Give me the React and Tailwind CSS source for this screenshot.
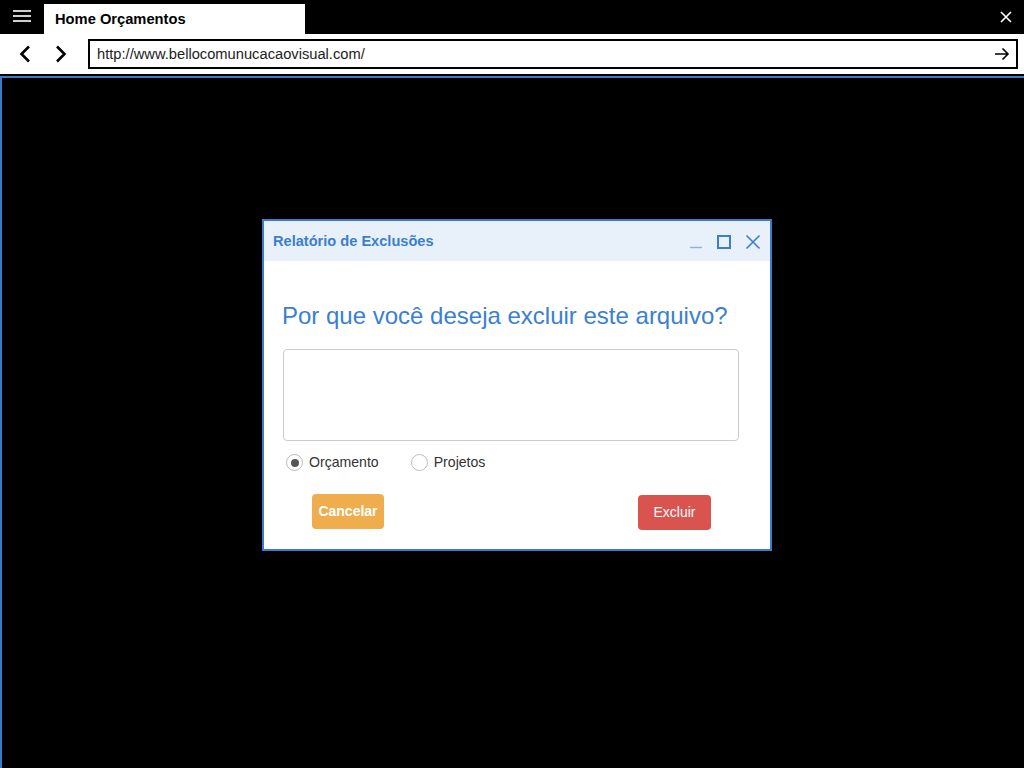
import React, { useState } from 'react';

const App = () => {
  const [kind, setKind] = useState('orcamento');

  return (
    <div className="w-[1024px] h-[768px] bg-black flex flex-col overflow-hidden" style={{ fontFamily: '"Liberation Sans", Arial, sans-serif' }}>
      {/* title bar */}
      <div className="h-[34px] flex items-end shrink-0">
        <div className="w-[44px] h-[34px] flex items-center justify-center">
          <svg width="18" height="14" viewBox="0 0 18 14" className="mb-[2px]">
            <path d="M0 2h18M0 7h18M0 12h18" stroke="#d0d0d0" strokeWidth="2" />
          </svg>
        </div>
        <div className="w-[261px] h-[30px] bg-white flex items-center pl-[11px] text-[14.7px] font-bold text-black">
          Home Orçamentos
        </div>
        <div className="flex-1" />
        <div className="w-[32px] h-[34px] flex items-center justify-center mr-[2px]">
          <svg width="12" height="12" viewBox="0 0 12 12">
            <path d="M1 1l10 10M11 1L1 11" stroke="#fff" strokeWidth="1.6" />
          </svg>
        </div>
      </div>

      {/* address row */}
      <div className="h-[40px] bg-white flex items-center shrink-0 pr-[6px]">
        <div className="w-[88px] flex items-center">
          <svg width="12" height="18" viewBox="0 0 12 18" className="ml-[19px]">
            <path d="M10 1.5L2.5 9l7.5 7.5" fill="none" stroke="#000" strokeWidth="2.6" />
          </svg>
          <svg width="12" height="18" viewBox="0 0 12 18" className="ml-[24px]">
            <path d="M2 1.5L9.5 9L2 16.5" fill="none" stroke="#000" strokeWidth="2.6" />
          </svg>
        </div>
        <div className="flex-1 h-[30px] border-2 border-black flex items-center pl-[7px] pr-[6px] text-[14.7px] text-[#222]">
          <span className="flex-1">http://www.bellocomunucacaovisual.com/</span>
          <svg width="16" height="14" viewBox="0 0 16 14">
            <path d="M1 7h13M8.5 1.5L14 7l-5.5 5.5" fill="none" stroke="#000" strokeWidth="1.6" />
          </svg>
        </div>
      </div>
      <div className="h-[2px] bg-black shrink-0" />

      {/* content area */}
      <div className="flex-1 border-t-2 border-l-2 border-[#3a78c8] flex items-start justify-start pt-[141px] pl-[260px]">
        <div className="w-[510px] h-[332px] border-2 border-[#3a7bd5] bg-white flex flex-col">
          <div className="h-[40px] bg-[#e8f0f9] flex items-center pl-[9px] pr-[9px] pt-[1px]">
            <span className="flex-1 text-[14.6px] font-bold text-[#3b7fcc]">Relatório de Exclusões</span>
            <div className="flex items-center gap-[14px]">
              <svg width="14" height="14" viewBox="0 0 14 14">
                <path d="M1 12.5h12" stroke="#8db3e0" strokeWidth="1.5" />
              </svg>
              <svg width="14" height="14" viewBox="0 0 14 14">
                <rect x="1" y="1" width="12" height="12" fill="none" stroke="#3b7fcc" strokeWidth="2" />
              </svg>
              <svg width="16" height="16" viewBox="0 0 16 16">
                <path d="M1.5 1.5l13 13M14.5 1.5l-13 13" stroke="#3b7fcc" strokeWidth="1.6" />
              </svg>
            </div>
          </div>
          <div className="flex flex-col px-[19px]">
            <div className="mt-[40px] text-[24px] leading-[30px] text-[#3a80d2] -ml-[1px]">
              Por que você deseja excluir este arquivo?
            </div>
            <textarea className="mt-[18px] w-[456px] h-[92px] border border-[#cccccc] rounded-[4px] resize-none outline-none" />
            <div className="mt-[11px] flex items-center text-[14.1px] text-[#333]">
              <label className="flex items-center gap-[6px] ml-[3px] cursor-pointer" onClick={() => setKind('orcamento')}>
                <span className="w-[17px] h-[17px] rounded-full border border-[#bbb] flex items-center justify-center">
                  {kind === 'orcamento' && <span className="w-[8px] h-[8px] rounded-full bg-[#555]" />}
                </span>
                Orçamento
              </label>
              <label className="flex items-center gap-[6px] ml-[32px] cursor-pointer" onClick={() => setKind('projetos')}>
                <span className="w-[17px] h-[17px] rounded-full border border-[#bbb] flex items-center justify-center">
                  {kind === 'projetos' && <span className="w-[8px] h-[8px] rounded-full bg-[#555]" />}
                </span>
                Projetos
              </label>
            </div>
            <div className="mt-[21px] flex items-start justify-between pl-[29px] pr-[40px]">
              <button className="w-[72px] h-[35px] bg-[#f0ad4e] rounded-[4px] text-white text-[14px] font-bold">Cancelar</button>
              <button className="w-[73px] h-[35px] mt-[1px] bg-[#d9534f] rounded-[4px] text-white text-[14px]">Excluir</button>
            </div>
          </div>
        </div>
      </div>
    </div>
  );
};

export default App;
